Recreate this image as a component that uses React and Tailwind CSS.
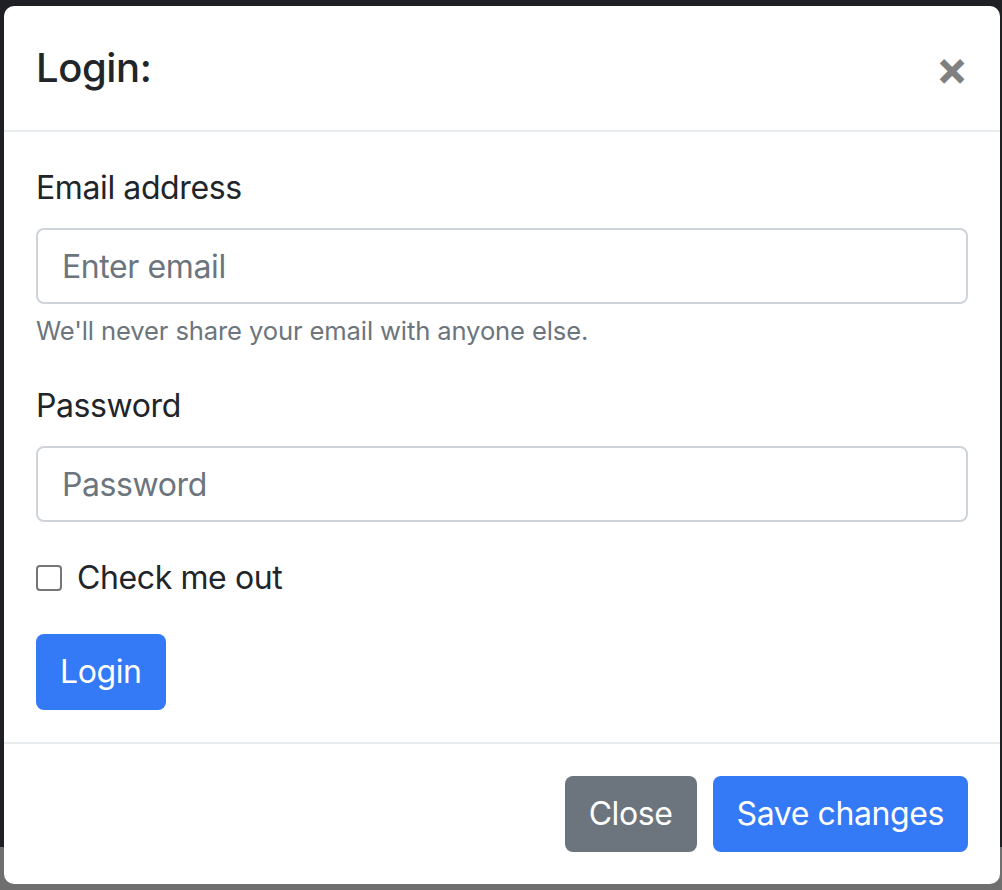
import { useState } from 'react'

// Modal de login estilo Bootstrap, a escala 2x
function App() {
  const [marcado, setMarcado] = useState(false)

  return (
    <div className="h-[890px] w-[1002px] overflow-hidden bg-[linear-gradient(to_bottom,#1f2023_847px,#6f6f6f_847px)] pl-[4px] pr-[2px] pt-[6px] font-['Inter',sans-serif] tracking-[-0.025em] text-[#212529]">
      <div className="flex w-[996px] flex-col rounded-[10px] bg-white">
        <div className="flex h-[126px] items-center justify-between border-b-2 border-[#e9ecef] px-[32px]">
          <h5 className="text-[40px] font-medium leading-[60px]">Login:</h5>
          <button
            type="button"
            className="text-[48px] font-bold leading-[60px] text-[#808080]"
          >
            ×
          </button>
        </div>

        <form className="flex flex-col p-[32px]">
          <label className="mb-[16px] text-[32px] leading-[48px]">Email address</label>
          <input
            type="email"
            placeholder="Enter email"
            className="h-[76px] rounded-[8px] border-2 border-[#ced4da] px-[24px] text-[32px] placeholder:text-[#6c757d]"
          />
          <small className="mt-[8px] text-[25.6px] leading-[38px] tracking-[-0.005em] text-[#6c757d]">
            We'll never share your email with anyone else.
          </small>

          <label className="mb-[16px] mt-[32px] text-[32px] leading-[48px]">Password</label>
          <input
            type="password"
            placeholder="Password"
            className="h-[76px] rounded-[8px] border-2 border-[#ced4da] px-[24px] text-[32px] placeholder:text-[#6c757d]"
          />

          <label className="mt-[32px] flex h-[48px] items-center gap-[15px] text-[32px]">
            <input
              type="checkbox"
              checked={marcado}
              onChange={() => setMarcado(!marcado)}
              className="h-[26px] w-[26px] appearance-none rounded-[4px] border-2 border-[#767676] bg-white"
            />
            Check me out
          </label>

          <div className="mt-[32px]">
            <button
              type="button"
              className="h-[76px] rounded-[8px] bg-[#3479f6] px-[24px] text-[32px] text-white"
            >
              Login
            </button>
          </div>
        </form>

        <div className="flex justify-end gap-[16px] border-t-2 border-[#e9ecef] px-[32px] py-[32px]">
          <button
            type="button"
            className="h-[76px] rounded-[8px] bg-[#6c757d] px-[24px] text-[32px] text-white"
          >
            Close
          </button>
          <button
            type="button"
            className="h-[76px] rounded-[8px] bg-[#3479f6] px-[24px] text-[32px] text-white"
          >
            Save changes
          </button>
        </div>
      </div>
    </div>
  )
}

export default App
